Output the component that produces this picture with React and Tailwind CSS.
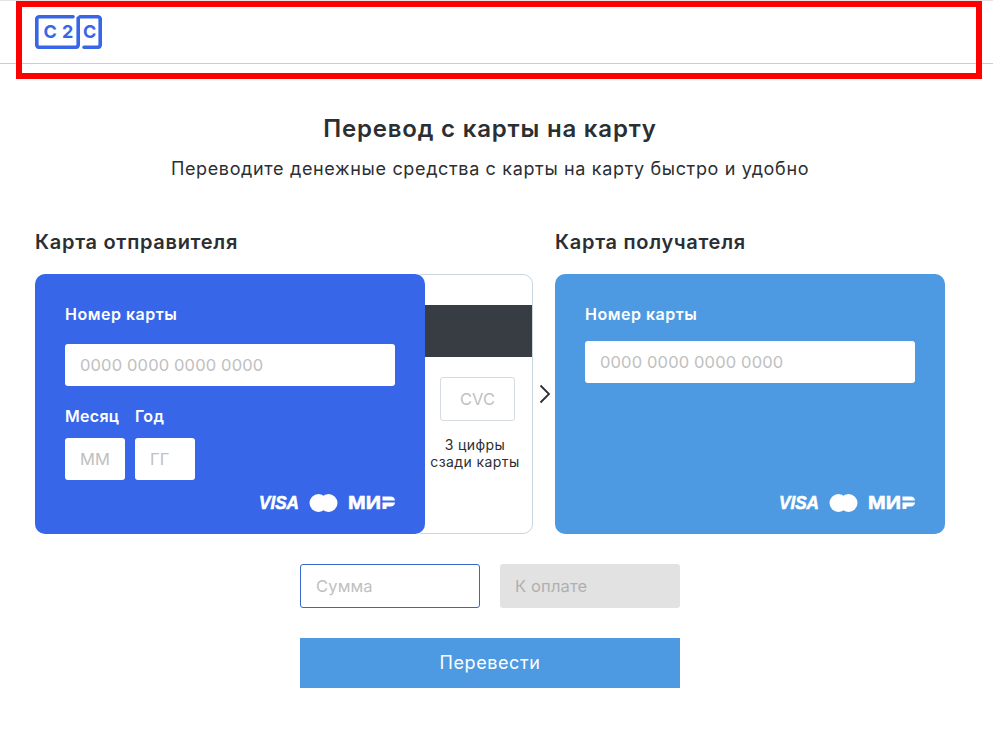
const F = '[font-family:Inter,"Noto_Sans",sans-serif]';

function Brands() {
  return (
    <svg width="136" height="20" viewBox="0 0 136 20" className="block" aria-label="Visa Mastercard МИР">
      <text x="0" y="16" fill="#fff" stroke="#fff" strokeWidth="0.6" fontFamily="Liberation Sans" fontStyle="italic" fontWeight="700" fontSize="19" textLength="40" lengthAdjust="spacingAndGlyphs">VISA</text>
      <circle cx="59.5" cy="10" r="9" fill="#fff" />
      <circle cx="69.5" cy="10" r="9" fill="#fff" />
      <text x="89" y="16" fill="#fff" stroke="#fff" strokeWidth="0.6" fontFamily="Liberation Sans" fontWeight="700" fontSize="18" textLength="33" lengthAdjust="spacingAndGlyphs">МИ</text>
      <path d="M123.500 3.500h8q4 0 4.500 4h-12.500zM123.500 9.500H136q-.5 4-4.500 4h-4V16h-4z" fill="#fff" />
    </svg>
  );
}

function Field({ w, h, text, className = "" }) {
  return (
    <div className={`${w} ${h} flex items-center rounded-[3px] bg-white pl-[15px] text-[16.500px] tracking-[0.15px] text-[#c0c0c0] ${className}`}>{text}</div>
  );
}

export default function App() {
  return (
    <div className={`relative h-[732px] w-[993px] overflow-hidden bg-white text-[#2b2f33] ${F}`}>
      <header className="flex h-[64px] items-start border-t border-b border-t-[#e4e4e4] border-b-[#bfd0dc] pl-[35px] pt-[14px]">
        <svg width="67" height="34" viewBox="0 0 67 34" aria-label="C2C logo">
          <path d="M38 1.800H4A2.500 2.500 0 0 0 1.800 4v26A2.500 2.500 0 0 0 4 32.200h37a2.500 2.500 0 0 0 2.200-2.200V3" fill="none" stroke="#3767e8" strokeWidth="3.600" strokeLinecap="round" />
          <path d="M45 1.800h18A2.500 2.500 0 0 1 65.200 4v26a2.500 2.500 0 0 1-2.200 2.200H49" fill="none" stroke="#3767e8" strokeWidth="3.600" strokeLinecap="round" />
          <text x="8.500" y="23" fill="#3767e8" fontFamily="Inter" fontWeight="700" fontSize="18">C</text>
          <text x="27" y="23" fill="#3767e8" fontFamily="Inter" fontWeight="700" fontSize="18">2</text>
          <text x="48" y="23" fill="#3767e8" fontFamily="Inter" fontWeight="700" fontSize="18">C</text>
        </svg>
      </header>

      <main className="flex flex-col items-center pr-[48px] pl-[35px]">
        <h1 className="mt-[47px] text-[24px] leading-[36px] font-semibold tracking-[0.8px]">Перевод с карты на карту</h1>
        <p className="mt-[7px] text-[18px] leading-[30px] tracking-[0.65px]">Переводите денежные средства с карты на карту быстро и удобно</p>

        <div className="mt-[45px] flex w-full gap-[22px]">
          <section className="w-[498px]">
            <h2 className="text-[20px] leading-[26px] font-semibold tracking-[0.7px]">Карта отправителя</h2>
            <div className="mt-[19px] flex">
              <div className="relative z-10 flex h-[260px] w-[390px] flex-col rounded-[10px] bg-[#3767e8] px-[30px] pt-[28px] text-white">
                <div className="text-[16px] leading-[24px] font-semibold tracking-[0.5px]">Номер карты</div>
                <Field w="w-[330px]" h="h-[42px]" text="0000 0000 0000 0000" className="mt-[18px]" />
                <div className="mt-[17px] flex gap-[10px] text-[16px] leading-[26px] font-semibold tracking-[0.3px]">
                  <div className="w-[60px] whitespace-nowrap">Месяц</div>
                  <div>Год</div>
                </div>
                <div className="mt-[9px] flex gap-[10px]">
                  <Field w="w-[60px]" h="h-[42px]" text="ММ" />
                  <Field w="w-[60px]" h="h-[42px]" text="ГГ" />
                </div>
                <div className="mt-[13px] flex justify-end"><Brands /></div>
              </div>
              <div className="-ml-[12px] flex h-[260px] w-[120px] flex-col items-center rounded-[10px] border border-[#c8d6e0] pl-[9px]">
                <div className="-ml-[9px] mt-[30px] h-[52px] w-[118px] shrink-0 bg-[#373d42]" />
                <div className="mt-[20px] flex h-[44px] w-[75px] items-center justify-center rounded-[3px] border border-[#d5dbe0] text-[16.500px] text-[#c0c0c0]">CVC</div>
                <div className="-ml-[5px] mt-[15px] text-center text-[14px] leading-[17px] tracking-[0.4px] whitespace-nowrap">3 цифры<br />сзади карты</div>
              </div>
            </div>
          </section>

          <section className="relative w-[390px]">
            <svg className="absolute top-[155px] -left-[16px]" width="12" height="20" viewBox="0 0 12 20" aria-hidden="true">
              <path d="M1.500 1.500 10 10l-8.500 8.500" fill="none" stroke="#2b2f33" strokeWidth="1.800" />
            </svg>
            <h2 className="text-[20px] leading-[26px] font-semibold tracking-[0.7px]">Карта получателя</h2>
            <div className="mt-[19px] flex h-[260px] flex-col rounded-[10px] bg-[#4d9ae2] px-[30px] pt-[28px] text-white">
              <div className="text-[16px] leading-[24px] font-semibold tracking-[0.5px]">Номер карты</div>
              <Field w="w-[330px]" h="h-[42px]" text="0000 0000 0000 0000" className="mt-[15px]" />
              <div className="mt-auto mb-[21px] flex justify-end"><Brands /></div>
            </div>
          </section>
        </div>

        <div className="mt-[30px] flex gap-[20px]">
          <Field w="w-[180px]" h="h-[44px]" text="Сумма" className="border border-[#3767c8] pl-[14px]" />
          <Field w="w-[180px]" h="h-[44px]" text="К оплате" className="bg-[#e2e2e2]! text-[#b0b0b0]!" />
        </div>
        <button className="mt-[30px] h-[50px] w-[380px] bg-[#4d9ae2] pb-[2px] text-[18px] tracking-[0.6px] text-white">Перевести</button>
      </main>

      <div className="pointer-events-none absolute top-px left-[16px] h-[78px] w-[966px] border-[6px] border-[#ff0000]" />
    </div>
  );
}
